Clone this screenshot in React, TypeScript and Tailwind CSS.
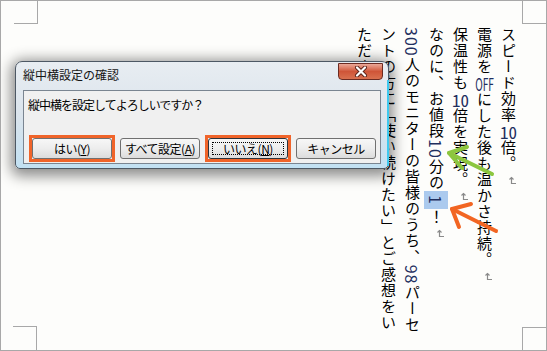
import type { ReactNode } from 'react'

const Mark = () => (
  <svg viewBox="0 0 9 9" className="inline-block w-[9px] h-[9px] mt-[4px] align-middle">
    <path d="M3.5 1.5 V7.5 H8" fill="none" stroke="#8a8a8a" strokeWidth="1.2" />
    <path d="M1.5 3.5 L3.5 1.5 L5.5 3.5" fill="none" stroke="#8a8a8a" strokeWidth="1.2" />
  </svg>
)

const Tcy = ({ children }: { children: ReactNode }) => (
  <span className="[text-combine-upright:all] text-[17px] text-[#1f2f5f]">{children}</span>
)

const Num = ({ children }: { children: ReactNode }) => <span className="text-[16px] text-[#1f2f5f]">{children}</span>

function Btn({ children, focus, hl }: { children: ReactNode; focus?: boolean; hl?: boolean }) {
  return (
    <div className="relative">
      <button
        className={
          focus
            ? 'relative w-[80px] h-[21px] rounded-[3px] border border-[#2b333b] bg-gradient-to-b from-[#f7f7f7] via-[#ededed] to-[#dcdcdc] text-[12px] tracking-[-0.5px] text-black flex items-center justify-center'
            : 'relative w-[80px] h-[21px] rounded-[3px] border border-[#707070] bg-gradient-to-b from-[#f7f7f7] via-[#ededed] to-[#dcdcdc] text-[12px] tracking-[-0.5px] text-black flex items-center justify-center'
        }
      >
        {children}
        {focus && <span className="absolute inset-[3px] border border-dotted border-black" />}
      </button>
      {hl && <div className="absolute -inset-[3px] border-[3px] border-[#f0642a] pointer-events-none" />}
    </div>
  )
}

export default function App() {
  return (
    <div className="relative w-[547px] h-[351px] overflow-hidden border border-[#a8a8a8] bg-[#fdfdfb] font-['Noto_Sans_CJK_JP',sans-serif] text-black">
      {/* page corner marks */}
      <div className="absolute left-[13px] top-[-1px] w-[24px] h-[24px] border-r border-b border-[#a8a8a8]" />
      <div className="absolute left-[521px] top-[-1px] w-[30px] h-[24px] border-l border-b border-[#a8a8a8]" />
      <div className="absolute left-[12px] top-[325px] w-[24px] h-[30px] border-t border-r border-[#a8a8a8]" />
      <div className="absolute left-[521px] top-[326px] w-[30px] h-[30px] border-l border-t border-[#a8a8a8]" />

      {/* vertical document text */}
      <div className="flex justify-end pr-[26px] pt-[26px]">
        <div className="[writing-mode:vertical-rl] h-[310px] whitespace-nowrap text-[15px] leading-[24px] tracking-[1px]">
          <p>
            スピード効率<Tcy>10</Tcy>倍。<Mark />
          </p>
          <p>
            電源を<Tcy>OFF</Tcy>にした後も温かさ持続。<Mark />
          </p>
          <p>
            保温性も<Tcy>10</Tcy>倍を実現。<Mark />
          </p>
          <p>
            なのに、お値段<Num>10</Num>分の<span className="bg-[#abcaee] px-[4px] text-[16px] text-[#1f2f5f]">1</span>！<Mark />
          </p>
          <p>
            <Num>300</Num>人のモニターの皆様のうち、<Num>98</Num>パーセ
            <br />
            ントの方に「使い続けたい」とご感想をい
            <br />
            ただきました。<Mark />
          </p>
        </div>
      </div>

      {/* dialog */}
      <div className="absolute left-[14px] top-[60px] w-[374px] h-[108px] flex flex-col rounded-t-[7px] rounded-b-[5px] border border-[#4d5864] bg-gradient-to-b from-[#e8edf2] via-[#dbe4ec] to-[#c2e1f3] shadow-[0_3px_14px_4px_rgba(0,0,0,0.45)]">
        <div className="absolute right-[-1px] top-[18px] bottom-[2px] w-[2px] bg-[#3ec9ef]" />
        <div className="h-[28px] flex items-start justify-between pl-[7px] pr-[5px]">
          <span className="mt-[5px] text-[12px] leading-[16px] text-[#151515]">縦中横設定の確認</span>
          <button className="mt-[1px] w-[45px] h-[17px] rounded-b-[4px] border border-[#6b2b22] bg-gradient-to-b from-[#eaa898] via-[#cf5538] to-[#d9704f] flex items-center justify-center">
            <svg viewBox="0 0 14 11" className="w-[14px] h-[11px]">
              <path d="M3 1.5 L11 9.5 M11 1.5 L3 9.5" stroke="#5a2218" strokeWidth="4" strokeLinecap="round" />
              <path d="M3 1.5 L11 9.5 M11 1.5 L3 9.5" stroke="#ffffff" strokeWidth="2.2" strokeLinecap="round" />
            </svg>
          </button>
        </div>
        <div className="mx-[7px] mb-[4px] flex-1 border border-[#7a8591] bg-[#f0f0f0] pl-[4px]">
          <p className="mt-[6px] text-[12px] leading-[16px] tracking-[-1px]">縦中横を設定してよろしいですか？</p>
          <div className="mt-[25px] pl-[4px] flex gap-[8px]">
            <Btn hl>
              はい(<u>Y</u>)
            </Btn>
            <Btn>
              すべて設定(<u>A</u>)
            </Btn>
            <Btn focus hl>
              いいえ(<u>N</u>)
            </Btn>
            <Btn>キャンセル</Btn>
          </div>
        </div>
      </div>

      {/* annotation arrows */}
      <svg className="absolute inset-0 pointer-events-none" width="547" height="351" viewBox="0 0 547 351">
        <g fill="none" stroke="#8cc63f" strokeWidth="4" strokeLinecap="round" strokeLinejoin="round">
          <path d="M491 173 L448 152" />
          <path d="M466 146 L448 152 L461 167" />
        </g>
        <g fill="none" stroke="#f26522" strokeWidth="4" strokeLinecap="round" strokeLinejoin="round">
          <path d="M495 230 L451 208" />
          <path d="M470 203 L451 208 L458 226" />
        </g>
      </svg>
    </div>
  )
}
